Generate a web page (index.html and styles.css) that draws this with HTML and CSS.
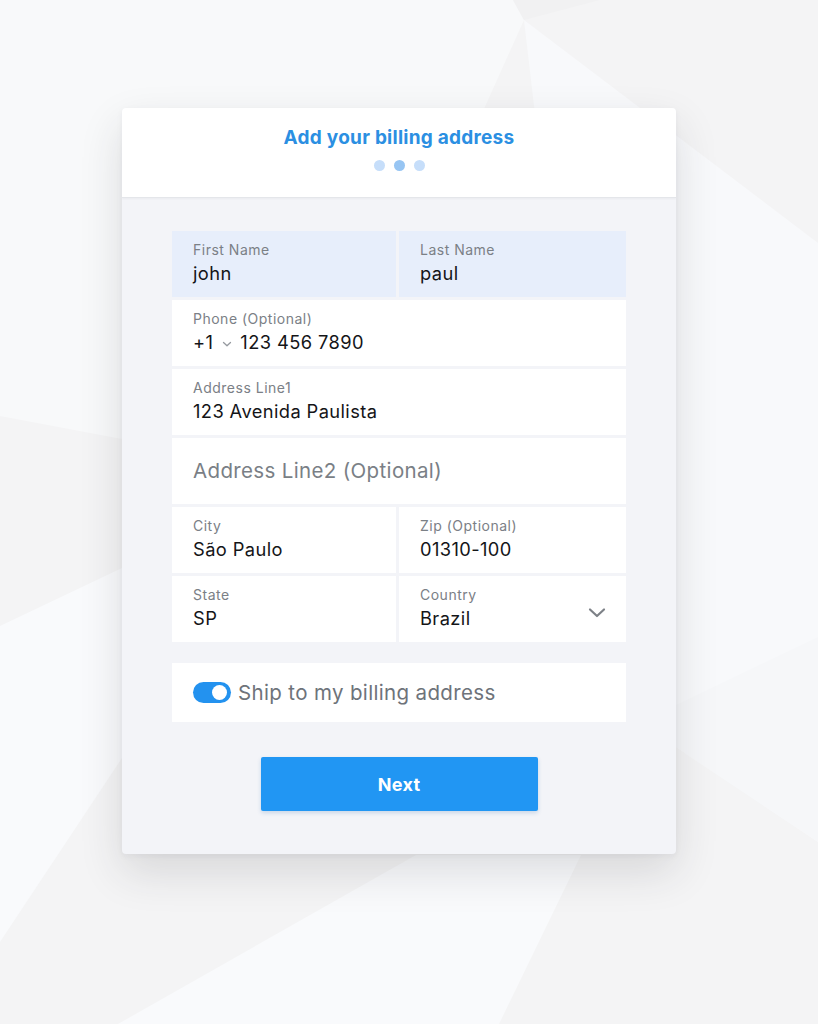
FILE: index.html
```html
<!DOCTYPE html>
<html lang="en">
<head>
<meta charset="utf-8">
<title>Billing address</title>
<link rel="stylesheet" href="styles.css">
</head>
<body>
<div class="backdrop" aria-hidden="true">
  <svg width="818" height="1024" viewBox="0 0 818 1024">
    <rect width="818" height="1024" fill="#f4f4f5"/>
    <polygon points="0,0 513,0 524,20 470,140 122,439 0,416" fill="#f8f9fa"/>
    <polygon points="524,20 545,200 676,747 818,842 818,243" fill="#f8f9fb"/>
    <polygon points="676,705 818,637 818,842 676,747" fill="#f6f7f9"/>
    <polygon points="0,626 122,568 122,758 0,942" fill="#f9fafc"/>
    <polygon points="118,1024 416,855 581,855 499,1024" fill="#f9fafc"/>
    <polygon points="513,0 524,20 600,0" fill="#f1f1f2"/>
  </svg>
</div>
<main class="page">
  <section class="card">
    <header class="card-head">
      <h1 class="title">Add your billing address</h1>
      <div class="steps">
        <span class="dot"></span>
        <span class="dot dot-active"></span>
        <span class="dot"></span>
      </div>
    </header>
    <div class="card-body">
      <div class="form-grid">
        <div class="field field-focus">
          <span class="label">First Name</span>
          <span class="value">john</span>
        </div>
        <div class="field field-focus">
          <span class="label">Last Name</span>
          <span class="value">paul</span>
        </div>
        <div class="field span-2">
          <span class="label">Phone (Optional)</span>
          <span class="value phone">+1
            <svg class="mini-chev" width="12" height="8" viewBox="0 0 12 8"><path d="M2.5 2.5 L6 5.8 L9.5 2.5" fill="none" stroke="#969aa0" stroke-width="1.3" stroke-linecap="round" stroke-linejoin="round"/></svg>
            <span class="phone-num">123 456 7890</span></span>
        </div>
        <div class="field span-2">
          <span class="label">Address Line1</span>
          <span class="value">123 Avenida Paulista</span>
        </div>
        <div class="field span-2 field-empty">
          <span class="placeholder">Address Line2 (Optional)</span>
        </div>
        <div class="field">
          <span class="label">City</span>
          <span class="value">São Paulo</span>
        </div>
        <div class="field">
          <span class="label">Zip (Optional)</span>
          <span class="value">01310-100</span>
        </div>
        <div class="field">
          <span class="label">State</span>
          <span class="value">SP</span>
        </div>
        <div class="field field-select">
          <div class="select-text">
            <span class="label">Country</span>
            <span class="value">Brazil</span>
          </div>
          <svg class="chev" width="18" height="12" viewBox="0 0 18 12"><path d="M2 2.5 L9 9 L16 2.5" fill="none" stroke="#7d8187" stroke-width="2.2" stroke-linecap="round" stroke-linejoin="round"/></svg>
        </div>
      </div>
      <div class="ship-row">
        <span class="toggle"><span class="knob"></span></span>
        <span class="ship-text">Ship to my billing address</span>
      </div>
      <div class="actions">
        <button class="btn-next" type="button">Next</button>
      </div>
    </div>
  </section>
</main>
</body>
</html>
```
FILE: styles.css
```css
* { box-sizing: border-box; }
html, body { margin: 0; padding: 0; }
body {
  width: 818px;
  height: 1024px;
  overflow: hidden;
  font-family: Inter, Roboto, "Liberation Sans", Arial, sans-serif;
  background: #f4f4f5;
  position: relative;
}
.backdrop {
  position: absolute;
  left: 0;
  top: 0;
  width: 818px;
  height: 1024px;
  z-index: 0;
}
.backdrop svg { display: block; }
.page {
  position: relative;
  z-index: 1;
  padding: 108px 0 0 122px;
}
.card {
  width: 554px;
  border-radius: 4px;
  background: #f3f4f8;
  box-shadow: 0 18px 44px rgba(40, 44, 52, 0.14), 0 2px 6px rgba(40, 44, 52, 0.05);
  overflow: hidden;
}
.card-head {
  height: 90px;
  background: #ffffff;
  border-bottom: 1px solid #e4e6ea;
  box-shadow: 0 1px 2px rgba(0, 0, 0, 0.04);
  display: flex;
  flex-direction: column;
  align-items: center;
  padding-top: 18px;
}
.title {
  margin: 0;
  font-size: 19px;
  line-height: 24px;
  font-weight: 700;
  color: #2b8fe2;
  letter-spacing: 0.25px;
}
.steps {
  display: flex;
  gap: 9px;
  margin-top: 10px;
}
.dot {
  width: 11px;
  height: 11px;
  border-radius: 50%;
  background: #c6defa;
}
.dot-active { background: #97c5f3; }
.card-body {
  padding: 33px 50px 43px;
}
.form-grid {
  display: grid;
  grid-template-columns: 224px 227px;
  grid-auto-rows: 66px;
  gap: 3px;
}
.field {
  background: #ffffff;
  padding: 11px 21px 0;
  display: flex;
  flex-direction: column;
}
.field-focus { background: #e7eefb; }
.span-2 { grid-column: span 2; }
.label {
  font-size: 14px;
  line-height: 16px;
  color: #7b8086;
  letter-spacing: 0.5px;
}
.value {
  margin-top: 4px;
  font-size: 18.3px;
  line-height: 22px;
  color: #141518;
  letter-spacing: 0.4px;
}
.phone {
  display: flex;
  align-items: center;
}
.mini-chev { margin: 3px 7px 0 8px; }
.field-empty {
  padding-top: 0;
  justify-content: center;
}
.placeholder {
  font-size: 20.5px;
  line-height: 26px;
  color: #7a7f86;
  letter-spacing: 0.35px;
}
.field-select {
  flex-direction: row;
  align-items: flex-start;
  justify-content: space-between;
  padding-right: 20px;
}
.select-text {
  display: flex;
  flex-direction: column;
}
.chev { margin-top: 20px; }
.ship-row {
  margin-top: 21px;
  height: 59px;
  background: #ffffff;
  display: flex;
  align-items: center;
  padding-left: 21px;
  gap: 7px;
}
.toggle {
  position: relative;
  width: 38px;
  height: 21px;
  border-radius: 11px;
  background: #2392ef;
  flex: none;
}
.knob {
  position: absolute;
  right: 4px;
  top: 3px;
  width: 15px;
  height: 15px;
  border-radius: 50%;
  background: #ffffff;
}
.ship-text {
  font-size: 20.5px;
  line-height: 26px;
  color: #6e737a;
  letter-spacing: 0.35px;
}
.actions {
  display: flex;
  justify-content: center;
  margin-top: 35px;
}
.btn-next {
  width: 277px;
  height: 54px;
  border: none;
  border-radius: 2px;
  background: #2196f3;
  color: #ffffff;
  font-family: Inter, Roboto, "Liberation Sans", Arial, sans-serif;
  font-size: 18px;
  font-weight: 700;
  letter-spacing: 0.3px;
  box-shadow: 0 2px 4px rgba(33, 100, 170, 0.2);
}
```
